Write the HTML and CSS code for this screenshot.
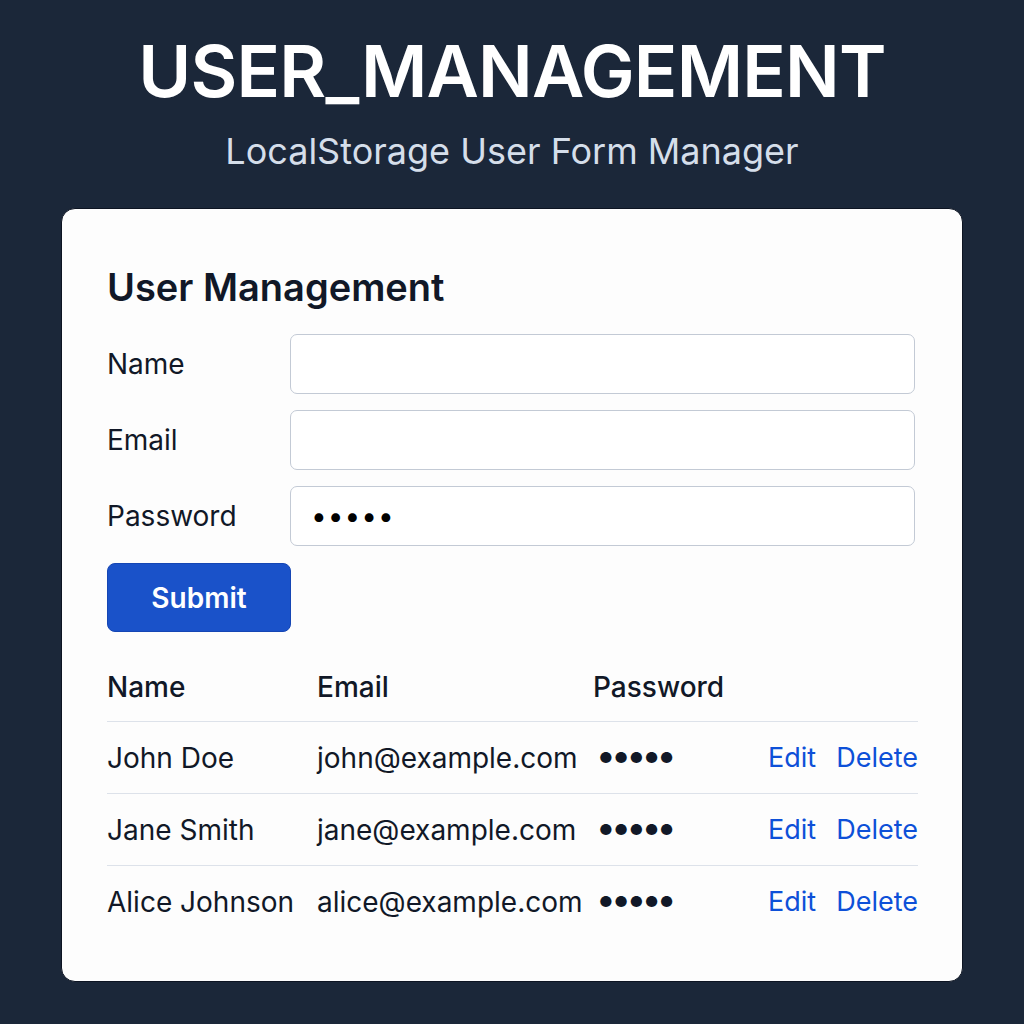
FILE: index.html
```html
<!DOCTYPE html>
<html lang="en">
<head>
<meta charset="utf-8">
<title>USER_MANAGEMENT</title>
<link rel="stylesheet" href="styles.css">
</head>
<body>
<header class="hero">
  <h1 class="hero-title">USER_MANAGEMENT</h1>
  <p class="hero-sub">LocalStorage User Form Manager</p>
</header>
<main class="card">
  <h2 class="card-title">User Management</h2>
  <form class="form">
    <label class="form-label" for="name">Name</label>
    <input class="form-input" id="name" type="text">
    <label class="form-label" for="email">Email</label>
    <input class="form-input" id="email" type="email">
    <label class="form-label" for="password">Password</label>
    <input class="form-input" id="password" type="password" value="12345">
  </form>
  <button class="btn" type="button">Submit</button>
  <div class="table">
    <div class="row head">
      <span>Name</span><span>Email</span><span>Password</span><span></span>
    </div>
    <div class="row">
      <span>John Doe</span><span>john@example.com</span><span class="dots">●●●●●</span>
      <span class="actions"><a>Edit</a><a>Delete</a></span>
    </div>
    <div class="row">
      <span>Jane Smith</span><span>jane@example.com</span><span class="dots">●●●●●</span>
      <span class="actions"><a>Edit</a><a>Delete</a></span>
    </div>
    <div class="row">
      <span>Alice Johnson</span><span>alice@example.com</span><span class="dots">●●●●●</span>
      <span class="actions"><a>Edit</a><a>Delete</a></span>
    </div>
  </div>
</main>
</body>
</html>
```
FILE: styles.css
```css
* { box-sizing: border-box; }
html, body { margin: 0; }
body {
  background: #1b2739;
  font-family: Inter, "Noto Sans", "Liberation Sans", sans-serif;
  color: #111827;
  width: 1024px;
  height: 1024px;
  overflow: hidden;
}
.hero { text-align: center; padding-top: 33px; }
.hero-title {
  margin: 0;
  font-size: 72px;
  line-height: 76px;
  font-weight: 600;
  color: #ffffff;
  letter-spacing: -0.8px;
}
.hero-sub {
  margin: 21px 0 0;
  font-size: 36px;
  line-height: 42px;
  color: #d5deea;
}
.card {
  width: 902px;
  margin: 36px auto 0;
  background: #fdfdfd;
  border: 1px solid #0d1422;
  border-radius: 14px;
  padding: 47px 43px 44px 45px;
  height: 774px;
}
.card-title {
  margin: 0;
  font-size: 38px;
  line-height: 62px;
  font-weight: 600;
  color: #111827;
}
.form {
  margin-top: 16px;
  display: grid;
  grid-template-columns: 183px 625px;
  row-gap: 16px;
  align-items: center;
}
.form-label { font-size: 28px; color: #111827; }
.form-input {
  height: 60px;
  border: 1px solid #c3cad5;
  border-radius: 7px;
  background: #fff;
  font-size: 28px;
  padding: 0 20px;
  font-family: inherit;
  letter-spacing: 1px;
}
.btn {
  margin-top: 17px;
  width: 184px;
  height: 69px;
  background: #1a52c9;
  border: 1px solid #1546b4;
  border-radius: 8px;
  color: #fff;
  font-family: inherit;
  font-size: 28px;
  font-weight: 600;
  display: block;
}
.table { margin-top: 21px; width: 811px; }
.row {
  display: grid;
  grid-template-columns: 210px 276px 1fr auto;
  align-items: center;
  height: 72px;
  font-size: 28px;
  border-top: 1px solid #dde2ea;
}
.row.head { height: 68px; border-top: none; font-weight: 500; }
.dots { font-size: 15px; letter-spacing: 1.5px; padding-left: 6px; }
.actions { display: flex; gap: 20px; font-size: 27px; }
.actions a { color: #0d50d8; }
```
